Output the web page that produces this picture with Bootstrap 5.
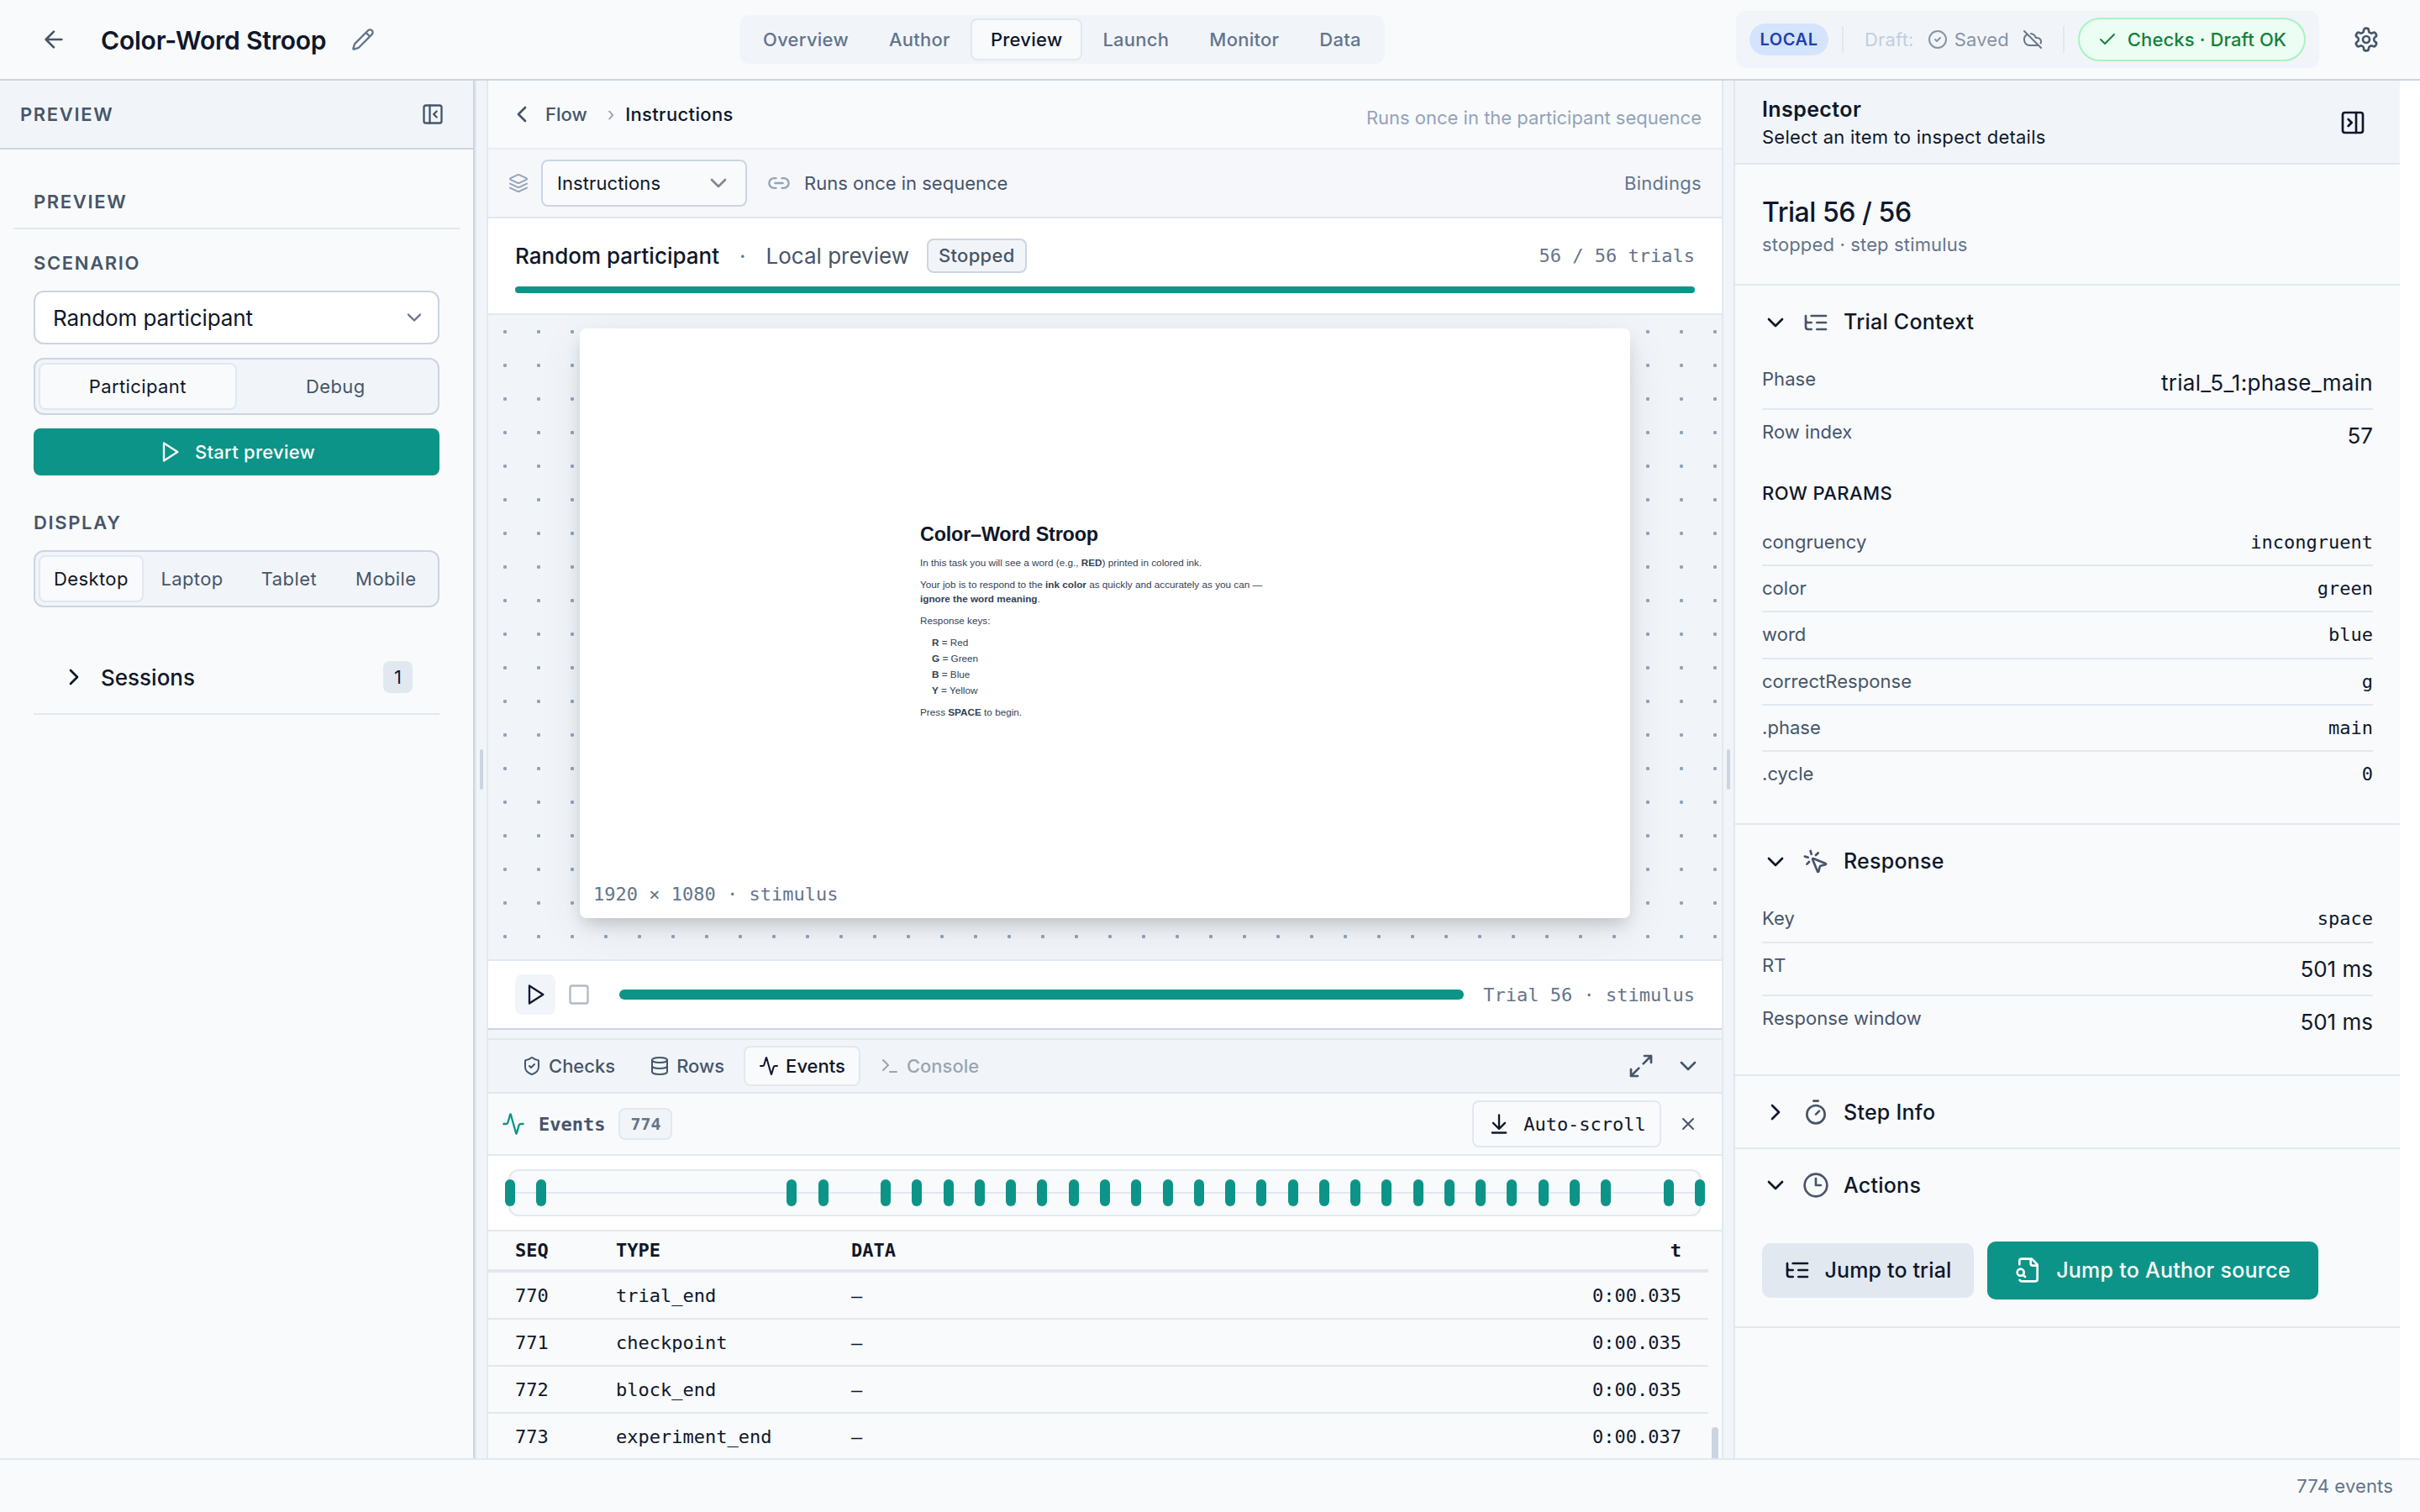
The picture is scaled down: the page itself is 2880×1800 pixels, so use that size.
<!DOCTYPE html>
<html lang="en">
<head>
  <meta charset="UTF-8" />
  <meta name="viewport" content="width=device-width, initial-scale=1.0"/>
  <title>Color-Word Stroop</title>
  <!-- Bootstrap CDN -->
  <link href="https://cdn.jsdelivr.net/npm/bootstrap@5.3.3/dist/css/bootstrap.min.css" rel="stylesheet">
  <style>
    :root {
      --ink: #0f172a;
      --slate: #475569;
      --muted: #64748b;
      --faint: #94a3b8;
      --line: #e2e8f0;
      --line-strong: #cbd5e1;
      --panel: #f8fafc;
      --sunken: #f1f5f9;
      --teal: #0d9488;
    }
    body {
      height: 1800px;
      overflow: hidden;
      background: #fff;
      color: var(--ink);
      font-family: Inter, "Liberation Sans", sans-serif;
      font-size: 22px;
      line-height: 1.5;
    }
    .mono { font-family: "DejaVu Sans Mono", "Liberation Mono", monospace; }
    .fw-mid { font-weight: 500; }
    .slate { color: var(--slate); }
    .muted { color: var(--muted); }
    .faint { color: var(--faint); }
    .text-lg { font-size: 26px; }

    .ico {
      width: 32px;
      height: 32px;
      flex: none;
      fill: none;
      stroke: currentColor;
      stroke-width: 2;
      stroke-linecap: round;
      stroke-linejoin: round;
    }
    .ico-24 { width: 24px; height: 24px; }
    .ico-28 { width: 28px; height: 28px; }

    /* Top bar */
    .topbar {
      display: grid;
      grid-template-columns: 880px auto 1fr;
      height: 96px;
      background: var(--panel);
      border-bottom: 2px solid var(--line-strong);
    }
    .exp-title { font-size: 30px; font-weight: 600; margin: 0 30px 0 40px; padding-top: 2px; letter-spacing: -.2px; }
    .mode-nav { height: 58px; padding: 4px; background: var(--sunken); border-radius: 12px; }
    .mode-nav .nav-link {
      padding: 0 22px;
      height: 50px;
      line-height: 46px;
      border: 2px solid transparent;
      border-radius: 8px;
      color: var(--muted);
      font-weight: 500;
      letter-spacing: .26px;
    }
    .mode-nav .nav-link.active { background: var(--panel); border-color: var(--line); color: var(--ink); }
    .status-box { height: 68px; padding: 0 16px; background: var(--sunken); border-radius: 12px; width: 694px; }
    .env-pill {
      height: 38px; line-height: 38px; width: 94px; text-align: center; border-radius: 19px;
      background: #d5e4fd; color: #1e40af; font-size: 20px; font-weight: 600; letter-spacing: .6px;
    }
    .v-rule { width: 2px; height: 32px; background: var(--line); }
    .save-state { margin: 0 24px 0 25px; letter-spacing: .2px; }
    .check-pill {
      height: 52px; width: 271px; border: 2px solid #a7f3c0; border-radius: 26px;
      background: #ecfdf3; color: #15803d; font-weight: 500; letter-spacing: .12px;
    }

    /* Work area */
    .work { height: 1640px; display: grid; grid-template-columns: 565px 16px 1468px 16px 791px 24px; }
    .grip { background: var(--sunken); border: solid var(--line); border-width: 0 2px; }
    .grip i { width: 4px; height: 48px; border-radius: 2px; background: var(--line-strong); }

    /* Left panel */
    .side { background: var(--panel); border-right: 2px solid var(--line-strong); }
    .side-head { height: 82px; padding: 0 34px 0 24px; background: var(--sunken); border-bottom: 2px solid var(--line-strong); }
    .cap { font-weight: 600; letter-spacing: 1.65px; color: var(--slate); line-height: 32px; }
    .side-title { margin: 0 16px; padding: 46px 24px 15px; border-bottom: 2px solid var(--line); }
    .side-body { padding: 24px 40px 0; width: 563px; }
    .picker { height: 64px; padding: 0 14px 0 21px; border: 2px solid var(--line-strong); border-radius: 12px; background: #fff; margin-top: 17px; }
    .picker span { letter-spacing: -.1px; }
    .seg { height: 68px; padding: 4px; border: 2px solid var(--line-strong); border-radius: 12px; background: var(--sunken); }
    .seg button {
      flex: 1 1 0; padding: 0 16px; border: 2px solid transparent; border-radius: 8px;
      background: none; color: var(--slate); letter-spacing: .4px;
    }
    .seg button.on { background: var(--panel); border-color: var(--line); color: var(--ink); }
    .btn-teal { background: var(--teal); color: #fff; border: 0; font-weight: 500; }
    .start { height: 56px; border-radius: 8px; font-size: 22px; gap: 16px; letter-spacing: .25px; }
    .sessions { height: 88px; margin-top: 40px; padding: 0 32px; border-bottom: 2px solid var(--line); }
    .count-tag { width: 35px; height: 38px; line-height: 38px; text-align: center; border-radius: 8px; background: var(--line); }

    /* Centre column */
    .crumbs { height: 82px; padding: 0 24px; background: var(--panel); border-bottom: 2px solid #e9eef4; }
    .crumb-here { letter-spacing: .35px; }
    .bindbar { height: 82px; padding: 0 24px 0 24px; background: #f5f7fb; border-bottom: 2px solid var(--line); }
    .node-select { width: 245px; height: 56px; padding: 0 16px 0 17px; margin-left: 15px; border: 2px solid var(--line-strong); border-radius: 8px; background: var(--panel); letter-spacing: .1px; }
    .runinfo { height: 115px; padding: 24px 32px 0; background: #fff; border-bottom: 2px solid var(--line); }
    .state-tag { height: 41px; line-height: 37px; padding: 0 12px; border: 2px solid var(--line-strong); border-radius: 8px; background: var(--sunken); color: var(--slate); font-weight: 500; letter-spacing: .3px; }
    .fullbar { height: 8px; border-radius: 4px; background: var(--teal); }
    .stage-area {
      height: 769px;
      padding-top: 16px;
      overflow: hidden;
      border-bottom: 2px solid var(--line);
      background: radial-gradient(circle at 20px 20px, #94a3b8 1.9px, transparent 2.5px) 0 0 / 40px 40px var(--sunken);
    }
    .stage {
      position: relative;
      width: 1250px;
      height: 702px;
      margin: 0 auto;
      padding: 230px 0 0 405px;
      border-radius: 8px;
      background: #fff;
      box-shadow: 0 10px 20px -4px rgba(0, 0, 0, .18), 0 14px 56px rgba(0, 0, 0, .07);
      font-family: "Liberation Sans", Arial, sans-serif;
      font-size: 11.74px;
      line-height: 17px;
      color: #334155;
    }
    .stage h2 { font-size: 23.4px; line-height: 30px; font-weight: 700; color: var(--ink); margin: 0 0 10px; letter-spacing: -.2px; }
    .stage p { margin: 0 0 9px; }
    .stage ul { list-style: none; margin: 0 0 9px; padding: 0 0 0 14px; }
    .stage li { margin-bottom: 2px; }
    .stage li:last-child { margin-bottom: 0; }
    .stage-size { position: absolute; left: 16px; bottom: 12px; font-size: 22px; line-height: 33px; color: var(--muted); }

    .player { height: 82px; padding: 0 32px; background: #fff; border-bottom: 2px solid var(--line-strong); }
    .play-btn { width: 48px; height: 48px; border-radius: 8px; background: var(--sunken); }
    .scrub { height: 12px; border-radius: 6px; background: var(--teal); margin: 0 23px 0 34px; }
    .h-grip { height: 12px; background: var(--sunken); border-bottom: 2px solid var(--line); }
    .dock-tabs { height: 64px; padding: 0 24px 0 22px; background: var(--sunken); border-bottom: 2px solid var(--line); gap: 5px; }
    .dock-tab { height: 48px; padding: 0 16px; gap: 8px; border: 2px solid transparent; border-radius: 8px; color: var(--slate); font-weight: 500; }
    .dock-tab.on { background: var(--panel); border-color: var(--line); color: var(--ink); }
    .dock-tab.off { opacity: .5; }
    .ev-head { height: 74px; padding: 0 28px 0 16px; background: var(--panel); border-bottom: 2px solid var(--line); }
    .ev-count { height: 38px; width: 64px; line-height: 34px; text-align: center; border: 2px solid var(--line); border-radius: 8px; background: var(--sunken); font-size: 20px; }
    .auto-btn { height: 56px; width: 225px; border: 2px solid var(--line); border-radius: 8px; gap: 15px; }
    .ev-strip { height: 90px; padding: 16px 24px; background: #fff; border-bottom: 2px solid var(--line); }
    .track { position: relative; height: 56px; border: 2px solid var(--line); border-radius: 12px; background: linear-gradient(var(--line), var(--line)) 0 25px / 100% 2px no-repeat var(--panel); }
    .tick { position: absolute; top: 10px; width: 12px; height: 32px; margin-left: -6px; border-radius: 6px; background: var(--teal); }
    .ev-wrap { position: relative; height: 270px; overflow: hidden; background: var(--panel); }
    .ev-table { width: 1452px; table-layout: fixed; border-collapse: separate; border-spacing: 0; }
    .ev-table th, .ev-table td { padding: 1px 32px 0; line-height: 53px; height: 56px; border-bottom: 2px solid var(--line); }
    .ev-table td { white-space: nowrap; }
    .ev-table th { height: 49px; padding-top: 0; line-height: 45px; border-bottom-width: 4px; }
    .ev-table td:first-child, .ev-table th:first-child { padding-right: 0; }
    .ev-thumb { position: absolute; right: 4px; top: 233px; width: 8px; height: 60px; border-radius: 4px; background: var(--line-strong); }

    /* Inspector */
    .inspector { background: var(--panel); }
    .insp-head { height: 100px; padding: 2px 40px 0 32px; background: var(--sunken); border-bottom: 2px solid var(--line); }
    .insp-title { font-size: 25px; font-weight: 600; line-height: 34px; letter-spacing: .4px; }
    .insp-sub { line-height: 32px; letter-spacing: .23px; }
    .insp-trial { height: 144px; padding: 33px 32px 0; border-bottom: 2px solid var(--line); }
    .insp-trial div { font-size: 32px; line-height: 48px; font-weight: 500; letter-spacing: -.45px; }
    .insp-trial span { display: block; line-height: 28px; letter-spacing: .15px; }
    .sect { padding: 0 32px; border-bottom: 2px solid var(--line); }
    .sect-head { height: 85px; padding-top: 2px; font-size: 25px; font-weight: 500; letter-spacing: .25px; }
    .sect-head .ico:first-child { margin-right: 16px; }
    .sect-head .ico + .ico { color: var(--slate); margin-right: 17px; }
    .kv { padding: 10px 0; border-bottom: 2px solid var(--line); line-height: 33.3px; }
    .kv > :first-child { color: var(--slate); letter-spacing: .05px; }
    .kv .text-lg { line-height: 41px; }
    .kv-end { border-bottom: 0; }
    .params { padding: 22px 0 14.7px; line-height: 33px; font-weight: 500; letter-spacing: .4px; }
    .act { font-size: 25px; line-height: 1; font-weight: 500; border-radius: 10px; padding: 0; gap: 16px; letter-spacing: .15px; }
    .act-trial { width: 252px; height: 65px; background: var(--line); color: var(--ink); }
    .act-src { width: 394px; height: 69px; gap: 17px; letter-spacing: .25px; }

    .foot { height: 64px; padding-right: 32px; background: var(--panel); border-top: 2px solid var(--line); color: var(--muted); letter-spacing: .15px; }
  </style>
</head>
<body>

  <!-- Icon sprite -->
  <svg width="0" height="0" class="d-none">
    <symbol id="arrow-left" viewBox="0 0 24 24"><path d="m12 19-7-7 7-7M19 12H5"/></symbol>
    <symbol id="pencil" viewBox="0 0 24 24"><path d="M21.174 6.812a1 1 0 0 0-3.986-3.987L3.842 16.174a2 2 0 0 0-.5.83l-1.321 4.352a.5.5 0 0 0 .623.622l4.353-1.32a2 2 0 0 0 .83-.497zM15 5l4 4"/></symbol>
    <symbol id="circle-check" viewBox="0 0 24 24"><circle cx="12" cy="12" r="10"/><path d="m9 12 2 2 4-4"/></symbol>
    <symbol id="cloud-off" viewBox="0 0 24 24"><path d="m2 2 20 20M5.782 5.782A7 7 0 0 0 9 19h8.5a4.5 4.5 0 0 0 1.307-.193M21.532 16.5A4.5 4.5 0 0 0 17.5 10h-1.79A7.008 7.008 0 0 0 10 5.07"/></symbol>
    <symbol id="check" viewBox="0 0 24 24"><path d="M20 6 9 17l-5-5"/></symbol>
    <symbol id="gear" viewBox="0 0 24 24"><path d="M12.22 2h-.44a2 2 0 0 0-2 2v.18a2 2 0 0 1-1 1.73l-.43.25a2 2 0 0 1-2 0l-.15-.08a2 2 0 0 0-2.73.73l-.22.38a2 2 0 0 0 .73 2.73l.15.1a2 2 0 0 1 1 1.72v.51a2 2 0 0 1-1 1.74l-.15.09a2 2 0 0 0-.73 2.73l.22.38a2 2 0 0 0 2.73.73l.15-.08a2 2 0 0 1 2 0l.43.25a2 2 0 0 1 1 1.73V20a2 2 0 0 0 2 2h.44a2 2 0 0 0 2-2v-.18a2 2 0 0 1 1-1.73l.43-.25a2 2 0 0 1 2 0l.15.08a2 2 0 0 0 2.73-.73l.22-.39a2 2 0 0 0-.73-2.73l-.15-.08a2 2 0 0 1-1-1.74v-.5a2 2 0 0 1 1-1.74l.15-.09a2 2 0 0 0 .73-2.73l-.22-.38a2 2 0 0 0-2.73-.73l-.15.08a2 2 0 0 1-2 0l-.43-.25a2 2 0 0 1-1-1.73V4a2 2 0 0 0-2-2z"/><circle cx="12" cy="12" r="3"/></symbol>
    <symbol id="panel-left" viewBox="0 0 24 24"><rect x="3" y="3" width="18" height="18" rx="2"/><path d="M9 3v18M16 15l-3-3 3-3"/></symbol>
    <symbol id="panel-right" viewBox="0 0 24 24"><rect x="3" y="3" width="18" height="18" rx="2"/><path d="M15 3v18M8 9l3 3-3 3"/></symbol>
    <symbol id="down" viewBox="0 0 24 24"><path d="m6 9 6 6 6-6"/></symbol>
    <symbol id="right" viewBox="0 0 24 24"><path d="m9 18 6-6-6-6"/></symbol>
    <symbol id="left" viewBox="0 0 24 24"><path d="m15 18-6-6 6-6"/></symbol>
    <symbol id="play" viewBox="0 0 24 24"><path d="m6 3 14 9-14 9z"/></symbol>
    <symbol id="stop" viewBox="0 0 24 24"><rect x="3" y="3" width="18" height="18" rx="2"/></symbol>
    <symbol id="layers" viewBox="0 0 24 24"><path d="M12.83 2.18a2 2 0 0 0-1.66 0L2.6 6.08a1 1 0 0 0 0 1.83l8.58 3.91a2 2 0 0 0 1.66 0l8.58-3.9a1 1 0 0 0 0-1.83zM22 17.65l-9.17 4.16a2 2 0 0 1-1.66 0L2 17.65M22 12.65l-9.17 4.16a2 2 0 0 1-1.66 0L2 12.65"/></symbol>
    <symbol id="link" viewBox="0 0 24 24"><path d="M9 17H7A5 5 0 0 1 7 7h2M15 7h2a5 5 0 1 1 0 10h-2M8 12h8"/></symbol>
    <symbol id="shield" viewBox="0 0 24 24"><path d="M20 13c0 5-3.5 7.5-7.66 8.95a1 1 0 0 1-.67-.01C7.5 20.5 4 18 4 13V6a1 1 0 0 1 1-1c2 0 4.5-1.2 6.24-2.72a1.17 1.17 0 0 1 1.52 0C14.51 3.81 17 5 19 5a1 1 0 0 1 1 1zM9 12l2 2 4-4"/></symbol>
    <symbol id="database" viewBox="0 0 24 24"><ellipse cx="12" cy="5" rx="9" ry="3"/><path d="M3 5v14a9 3 0 0 0 18 0V5M3 12a9 3 0 0 0 18 0"/></symbol>
    <symbol id="activity" viewBox="0 0 24 24"><path d="M22 12h-2.48a2 2 0 0 0-1.93 1.46l-2.35 8.36a.25.25 0 0 1-.48 0L9.24 2.18a.25.25 0 0 0-.48 0l-2.35 8.36A2 2 0 0 1 4.49 12H2"/></symbol>
    <symbol id="terminal" viewBox="0 0 24 24"><path d="m4 17 6-6-6-6M12 19h8"/></symbol>
    <symbol id="expand" viewBox="0 0 24 24"><path d="M15 3h6v6M9 21H3v-6M21 3l-7 7M3 21l7-7"/></symbol>
    <symbol id="to-bottom" viewBox="0 0 24 24"><path d="M12 17V3M6 11l6 6 6-6M19 21H5"/></symbol>
    <symbol id="close" viewBox="0 0 24 24"><path d="M18 6 6 18M6 6l12 12"/></symbol>
    <symbol id="tree" viewBox="0 0 24 24"><path d="M21 12h-8M21 6H8M21 18h-8M3 6v4c0 1.1.9 2 2 2h3M3 10v6c0 1.1.9 2 2 2h3"/></symbol>
    <symbol id="pointer" viewBox="0 0 24 24"><path d="M14 4.1 12 6M5.1 8l-2.9-.8M6 12l-1.9 2M7.2 2.2 8 5.1M9.037 9.69a.498.498 0 0 1 .653-.653l11 4.5a.5.5 0 0 1-.074.949l-4.349 1.041a1 1 0 0 0-.74.739l-1.04 4.35a.5.5 0 0 1-.95.074z"/></symbol>
    <symbol id="timer" viewBox="0 0 24 24"><path d="M10 2h4M12 14l3-3"/><circle cx="12" cy="14" r="8"/></symbol>
    <symbol id="clock" viewBox="0 0 24 24"><circle cx="12" cy="12" r="10"/><path d="M12 6v6h4.5"/></symbol>
    <symbol id="file-search" viewBox="0 0 24 24"><path d="M14 2v4a2 2 0 0 0 2 2h4M4.268 21a2 2 0 0 0 1.727 1H18a2 2 0 0 0 2-2V7l-5-5H6a2 2 0 0 0-2 2v3M9 18l-1.5-1.5"/><circle cx="5" cy="14" r="3"/></symbol>
  </svg>

  <!-- Top bar -->
  <header class="topbar align-items-center">
    <div class="d-flex align-items-center ps-5">
      <svg class="ico slate"><use href="#arrow-left"/></svg>
      <span class="exp-title">Color-Word Stroop</span>
      <svg class="ico ico-28 muted"><use href="#pencil"/></svg>
    </div>
    <nav class="nav mode-nav flex-nowrap">
      <a class="nav-link" href="#">Overview</a>
      <a class="nav-link" href="#">Author</a>
      <a class="nav-link active" href="#">Preview</a>
      <a class="nav-link" href="#">Launch</a>
      <a class="nav-link" href="#">Monitor</a>
      <a class="nav-link" href="#">Data</a>
    </nav>
    <div class="d-flex align-items-center justify-content-end pe-5">
      <div class="status-box d-flex align-items-center me-4">
        <span class="env-pill">LOCAL</span>
        <span class="v-rule ms-3"></span>
        <span class="save-state d-flex align-items-center flex-grow-1">
          <span style="color:#c3cedb">Draft:</span>
          <svg class="ico ico-24 ms-auto me-2" style="color:#8893a4"><use href="#circle-check"/></svg>
          <span style="color:#8893a4">Saved</span>
          <svg class="ico ico-24 ms-auto" style="color:#6b7687"><use href="#cloud-off"/></svg>
        </span>
        <span class="v-rule me-3"></span>
        <span class="check-pill d-flex align-items-center justify-content-center gap-2">
          <svg class="ico ico-24 me-1"><use href="#check"/></svg>Checks · Draft OK
        </span>
      </div>
      <svg class="ico slate ms-3"><use href="#gear"/></svg>
    </div>
  </header>

  <div class="work">

    <!-- Left panel -->
    <aside class="side">
      <div class="side-head d-flex align-items-center justify-content-between">
        <span class="cap">PREVIEW</span>
        <svg class="ico ico-28 slate"><use href="#panel-left"/></svg>
      </div>
      <div class="side-title cap">PREVIEW</div>
      <div class="side-body">
        <div class="cap">SCENARIO</div>
        <div class="picker d-flex align-items-center justify-content-between text-lg">
          <span>Random participant</span>
          <svg class="ico ico-28 muted"><use href="#down"/></svg>
        </div>
        <div class="seg d-flex mt-3">
          <button class="on">Participant</button>
          <button>Debug</button>
        </div>
        <button class="btn btn-teal start w-100 mt-3 d-flex align-items-center justify-content-center">
          <svg class="ico ico-28"><use href="#play"/></svg>Start preview
        </button>
        <div class="cap mt-4 pt-3">DISPLAY</div>
        <div class="seg d-flex" style="margin-top:17px">
          <button class="on">Desktop</button>
          <button>Laptop</button>
          <button>Tablet</button>
          <button>Mobile</button>
        </div>
        <div class="sessions d-flex align-items-center">
          <svg class="ico"><use href="#right"/></svg>
          <span class="text-lg fw-mid ms-3 flex-grow-1">Sessions</span>
          <span class="count-tag">1</span>
        </div>
      </div>
    </aside>

    <div class="grip d-flex align-items-center justify-content-center"><i></i></div>

    <!-- Centre column -->
    <main>
      <div class="crumbs d-flex align-items-center">
        <svg class="ico slate"><use href="#left"/></svg>
        <span class="slate fw-mid ms-2 ps-1">Flow</span>
        <span class="faint ms-4" style="margin-right:13px">›</span>
        <span class="fw-mid crumb-here">Instructions</span>
        <span class="faint ms-auto pt-2">Runs once in the participant sequence</span>
      </div>

      <div class="bindbar d-flex align-items-center">
        <svg class="ico ico-24 faint"><use href="#layers"/></svg>
        <div class="node-select d-flex align-items-center justify-content-between">
          <span>Instructions</span>
          <svg class="ico opacity-50"><use href="#down"/></svg>
        </div>
        <svg class="ico ico-28 faint ms-4 me-3"><use href="#link"/></svg>
        <span class="slate">Runs once in sequence</span>
        <span class="muted ms-auto" style="letter-spacing:.3px">Bindings</span>
      </div>

      <div class="runinfo">
        <div class="d-flex align-items-center">
          <span class="text-lg fw-mid">Random participant</span>
          <span class="text-lg muted mx-4">·</span>
          <span class="text-lg slate" style="margin-right:21px">Local preview</span>
          <span class="state-tag">Stopped</span>
          <span class="mono muted ms-auto">56 / 56 trials</span>
        </div>
        <div class="fullbar mt-3"></div>
      </div>

      <div class="stage-area">
        <div class="stage">
          <h2>Color–Word Stroop</h2>
          <p>In this task you will see a word (e.g., <b>RED</b>) printed in colored ink.</p>
          <p>Your job is to respond to the <b>ink color</b> as quickly and accurately as you can —<br><b>ignore the word meaning</b>.</p>
          <p>Response keys:</p>
          <ul>
            <li><b>R</b> = Red</li>
            <li><b>G</b> = Green</li>
            <li><b>B</b> = Blue</li>
            <li><b>Y</b> = Yellow</li>
          </ul>
          <p>Press <b>SPACE</b> to begin.</p>
          <span class="stage-size mono">1920 × 1080 · stimulus</span>
        </div>
      </div>

      <div class="player d-flex align-items-center">
        <span class="play-btn d-flex align-items-center justify-content-center"><svg class="ico ico-28"><use href="#play"/></svg></span>
        <svg class="ico ico-28 muted opacity-50" style="margin-left:14px"><use href="#stop"/></svg>
        <div class="scrub flex-grow-1"></div>
        <span class="mono muted">Trial 56 · stimulus</span>
      </div>
      <div class="h-grip"></div>

      <div class="dock-tabs d-flex align-items-center">
        <span class="dock-tab d-flex align-items-center"><svg class="ico ico-24"><use href="#shield"/></svg>Checks</span>
        <span class="dock-tab d-flex align-items-center"><svg class="ico ico-24"><use href="#database"/></svg>Rows</span>
        <span class="dock-tab on d-flex align-items-center"><svg class="ico ico-24"><use href="#activity"/></svg>Events</span>
        <span class="dock-tab off d-flex align-items-center"><svg class="ico ico-24"><use href="#terminal"/></svg>Console</span>
        <svg class="ico slate ms-auto" style="margin-right:19px"><use href="#expand"/></svg>
        <svg class="ico slate"><use href="#down"/></svg>
      </div>

      <div class="ev-head d-flex align-items-center mono">
        <svg class="ico ico-28" style="color:#0d9488"><use href="#activity"/></svg>
        <span class="slate fw-bold ms-3 me-3">Events</span>
        <span class="ev-count muted fw-bold">774</span>
        <span class="auto-btn d-flex align-items-center justify-content-center ms-auto me-3">
          <svg class="ico ico-28"><use href="#to-bottom"/></svg>Auto-scroll
        </span>
        <svg class="ico ico-24 slate ms-1"><use href="#close"/></svg>
      </div>

      <div class="ev-strip"><div class="track" id="track"></div></div>

      <div class="ev-wrap mono">
        <table class="ev-table">
          <colgroup><col style="width:120px"><col style="width:280px"><col><col style="width:240px"></colgroup>
          <thead><tr><th>SEQ</th><th>TYPE</th><th>DATA</th><th class="text-end">t</th></tr></thead>
          <tbody id="eventRows"></tbody>
        </table>
        <div class="ev-thumb"></div>
      </div>
    </main>

    <div class="grip d-flex align-items-center justify-content-center"><i></i></div>

    <!-- Inspector -->
    <aside class="inspector">
      <div class="insp-head d-flex align-items-center justify-content-between">
        <div>
          <div class="insp-title">Inspector</div>
          <div class="insp-sub">Select an item to inspect details</div>
        </div>
        <svg class="ico"><use href="#panel-right"/></svg>
      </div>
      <div class="insp-trial">
        <div>Trial 56 / 56</div>
        <span class="muted">stopped · step stimulus</span>
      </div>

      <section class="sect pb-0">
        <div class="sect-head d-flex align-items-center">
          <svg class="ico"><use href="#down"/></svg><svg class="ico"><use href="#tree"/></svg>Trial Context
        </div>
        <div class="kv d-flex justify-content-between"><span>Phase</span><span class="text-lg" style="letter-spacing:.3px">trial_5_1:phase_main</span></div>
        <div class="kv kv-end d-flex justify-content-between"><span>Row index</span><span class="text-lg">57</span></div>
        <div class="params">ROW PARAMS</div>
        <div id="params" style="padding-bottom:32px"></div>
      </section>

      <section class="sect">
        <div class="sect-head d-flex align-items-center">
          <svg class="ico"><use href="#down"/></svg><svg class="ico"><use href="#pointer"/></svg>Response
        </div>
        <div class="kv d-flex justify-content-between"><span>Key</span><span class="mono">space</span></div>
        <div class="kv d-flex justify-content-between"><span>RT</span><span class="text-lg">501 ms</span></div>
        <div class="kv kv-end d-flex justify-content-between" style="margin-bottom:32px"><span>Response window</span><span class="text-lg">501 ms</span></div>
      </section>

      <section class="sect">
        <div class="sect-head d-flex align-items-center">
          <svg class="ico"><use href="#right"/></svg><svg class="ico"><use href="#timer"/></svg>Step Info
        </div>
      </section>

      <section class="sect">
        <div class="sect-head d-flex align-items-center">
          <svg class="ico"><use href="#down"/></svg><svg class="ico"><use href="#clock"/></svg>Actions
        </div>
        <div class="d-flex align-items-center gap-3" style="padding:25px 0 32px">
          <button class="btn act act-trial d-flex align-items-center justify-content-center"><svg class="ico"><use href="#tree"/></svg>Jump to trial</button>
          <button class="btn act act-src btn-teal d-flex align-items-center justify-content-center"><svg class="ico"><use href="#file-search"/></svg>Jump to Author source</button>
        </div>
      </section>
    </aside>
    <div></div>
  </div>

  <footer class="foot d-flex align-items-center justify-content-end">774 events</footer>

  <!-- Bootstrap JS Bundle -->
  <script src="https://cdn.jsdelivr.net/npm/bootstrap@5.3.3/dist/js/bootstrap.bundle.min.js"></script>

  <script>
    // Filled buckets on the event track, out of 38
    const buckets = [0, 1, 9, 10];
    for (let i = 12; i <= 35; i++) buckets.push(i);
    buckets.push(37, 38);
    document.getElementById("track").innerHTML = buckets
      .map(b => `<span class="tick" style="left:${(b / 38 * 100).toFixed(3)}%"></span>`)
      .join("");

    const events = [
      [770, "trial_end", "0:00.035"],
      [771, "checkpoint", "0:00.035"],
      [772, "block_end", "0:00.035"],
      [773, "experiment_end", "0:00.037"]
    ];
    document.getElementById("eventRows").innerHTML = events
      .map(([seq, type, t]) => `<tr><td>${seq}</td><td>${type}</td><td>–</td><td class="text-end">${t}</td></tr>`)
      .join("");

    const params = [
      ["congruency", "incongruent"],
      ["color", "green"],
      ["word", "blue"],
      ["correctResponse", "g"],
      [".phase", "main"],
      [".cycle", "0"]
    ];
    document.getElementById("params").innerHTML = params
      .map(([k, v], i) => `<div class="kv ${i === params.length - 1 ? "kv-end" : ""} d-flex justify-content-between"><span>${k}</span><span class="mono">${v}</span></div>`)
      .join("");
  </script>
</body>
</html>
